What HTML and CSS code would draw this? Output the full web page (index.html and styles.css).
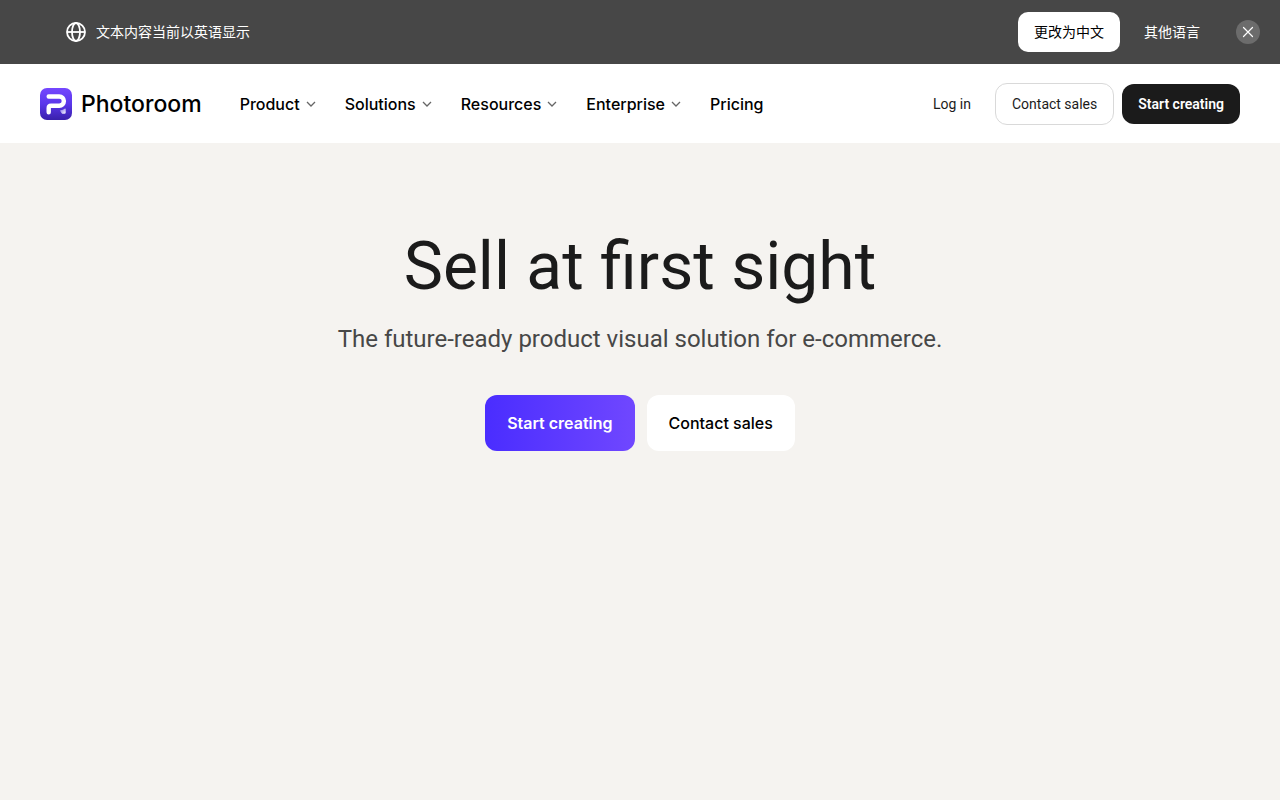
FILE: index.html
```html
<!DOCTYPE html>
<html lang="en">
<head>
<meta charset="utf-8">
<meta name="viewport" content="width=device-width, initial-scale=1">
<title>Photoroom</title>
<link rel="stylesheet" href="styles.css">
</head>
<body>
<aside class="banner" lang="zh">
  <svg class="globe" viewBox="0 0 24 24" aria-hidden="true"><circle cx="12" cy="12" r="9"/><ellipse cx="12" cy="12" rx="4" ry="9"/><path d="M3 12h18"/></svg>
  <p class="banner-text">文本内容当前以英语显示</p>
  <button class="banner-button banner-button-solid" type="button">更改为中文</button>
  <button class="banner-button" type="button">其他语言</button>
  <button class="banner-close" type="button" aria-label="关闭"><svg viewBox="0 0 24 24" aria-hidden="true"><path d="M7.500 7.500l9 9M16.500 7.500l-9 9"/></svg></button>
</aside>
<header class="header">
  <a class="brand" href="#">
    <svg class="brand-mark" viewBox="0 0 32 32" aria-hidden="true">
      <defs>
        <linearGradient id="tile" x1="0" y1="0" x2="0" y2="1"><stop offset="0" stop-color="#7547ff"/><stop offset=".5" stop-color="#5a37ea"/><stop offset="1" stop-color="#3920ab"/></linearGradient>
        <linearGradient id="dot" x1="0" y1="0" x2="1" y2="1"><stop offset="0" stop-color="#7a68e8"/><stop offset="1" stop-color="#fff"/></linearGradient>
      </defs>
      <rect width="32" height="32" rx="7" fill="url(#tile)"/>
      <path d="M8.700 8.500h10.600a4.600 4.600 0 0 1 0 9.200h-8.300q-2.300 0-2.300 2.300v4.200" fill="none" stroke="#fff" stroke-width="4.400" stroke-linecap="round" stroke-linejoin="round"/>
      <path d="M20.300 22.300q2.700-.2 4.700-1.800q.6-.3.700.4v3.600q0 1.300-1.300 1.300h-1.400q-1 0-1.500-.9l-1.300-2q-.3-.5.100-.6z" fill="url(#dot)"/>
    </svg>
    <span class="brand-name">Photoroom</span>
  </a>
  <nav class="nav" aria-label="Main">
    <button class="nav-item" type="button">Product<svg class="chevron" viewBox="0 0 10 10" aria-hidden="true"><path d="M1 3l4 4 4-4"/></svg></button>
    <button class="nav-item" type="button">Solutions<svg class="chevron" viewBox="0 0 10 10" aria-hidden="true"><path d="M1 3l4 4 4-4"/></svg></button>
    <button class="nav-item" type="button">Resources<svg class="chevron" viewBox="0 0 10 10" aria-hidden="true"><path d="M1 3l4 4 4-4"/></svg></button>
    <button class="nav-item" type="button">Enterprise<svg class="chevron" viewBox="0 0 10 10" aria-hidden="true"><path d="M1 3l4 4 4-4"/></svg></button>
    <a class="nav-item" href="#">Pricing</a>
  </nav>
  <div class="account">
    <a class="login" href="#">Log in</a>
    <a class="button button-outline" href="#">Contact sales</a>
    <a class="button button-dark" href="#">Start creating</a>
  </div>
</header>
<main class="hero">
  <h1 class="hero-title">Sell at first sight</h1>
  <p class="hero-text">The future-ready product visual solution for e-commerce.</p>
  <div class="hero-actions">
    <a class="cta cta-primary" href="#">Start creating</a>
    <a class="cta cta-light" href="#">Contact sales</a>
  </div>
</main>
</body>
</html>
```
FILE: styles.css
```css
* {
  box-sizing: border-box;
}

body {
  margin: 0;
  min-height: 100vh;
  background: #f5f3f0;
  color: #000;
  font-family: Inter, "Liberation Sans", sans-serif;
}

button {
  border: 0;
  padding: 0;
  background: none;
  color: inherit;
  font: inherit;
  cursor: pointer;
}

a {
  color: inherit;
  text-decoration: none;
}

.banner {
  display: flex;
  align-items: center;
  padding: 12px 20px 12px 64px;
  background: #474747;
  color: #fff;
  font-family: "Noto Sans CJK SC", sans-serif;
  font-size: 14px;
  line-height: 20px;
}

.globe {
  width: 24px;
  height: 24px;
  margin-right: 8px;
  fill: none;
  stroke: #fff;
  stroke-width: 1.8;
}

.banner-text {
  margin: 0 auto 0 0;
  padding-bottom: 2px;
}

.banner-button {
  height: 40px;
  padding: 0 16px 2px;
  border-radius: 10px;
  margin-right: 8px;
}

.banner-button-solid {
  background: #fff;
  color: #000;
}

.banner-close {
  width: 24px;
  height: 24px;
  margin-left: 12px;
  border-radius: 50%;
  background: #6c6c6c;
}

.banner-close svg {
  display: block;
  stroke: #fff;
  stroke-width: 1.2;
  stroke-linecap: round;
}

.header {
  display: flex;
  align-items: center;
  padding: 19px 40px 18px;
  background: #fff;
}

.brand {
  display: flex;
  align-items: center;
  gap: 9px;
  margin-right: 38px;
}

.brand-mark {
  width: 32px;
  height: 32px;
}

.brand-name {
  font-size: 23px;
  font-weight: 500;
  line-height: 32px;
}

.nav {
  display: flex;
  gap: 29px;
  font-size: 16px;
  font-weight: 500;
  line-height: 24px;
}

.nav-item {
  display: flex;
  align-items: center;
  gap: 6px;
}

.chevron {
  width: 10px;
  height: 10px;
  fill: none;
  stroke: #666;
  stroke-width: 1.3;
}

.account {
  display: flex;
  align-items: center;
  gap: 8px;
  margin-left: auto;
  font-family: Roboto, "Liberation Sans", sans-serif;
  font-size: 14px;
  line-height: 20px;
  color: #1b1b1b;
}

.login {
  margin-right: 16px;
}

.button {
  padding: 10px 16px;
  border-radius: 12px;
}

.button-outline {
  border: 1px solid #d9d9d9;
}

.button-dark {
  background: #1b1b1b;
  color: #fff;
  font-weight: 600;
}

.hero {
  display: flex;
  flex-direction: column;
  align-items: center;
  padding: 84px 24px;
  text-align: center;
}

.hero-title {
  margin: 0 0 16px;
  color: #1b1b1b;
  font-family: Roboto, "Liberation Sans", sans-serif;
  font-size: 66px;
  font-weight: 400;
  line-height: 80px;
}

.hero-text {
  margin: 0 0 40px;
  color: #474747;
  font-family: Roboto, "Liberation Sans", sans-serif;
  font-size: 24px;
  line-height: 32px;
}

.hero-actions {
  display: flex;
  gap: 12px;
}

.cta {
  padding: 16px 22px;
  border-radius: 12px;
  font-size: 16px;
  line-height: 24px;
}

.cta-primary {
  background: linear-gradient(90deg, #4a2dff, #7047ff);
  color: #fff;
  font-weight: 600;
}

.cta-light {
  background: #fff;
  font-weight: 500;
}
```
